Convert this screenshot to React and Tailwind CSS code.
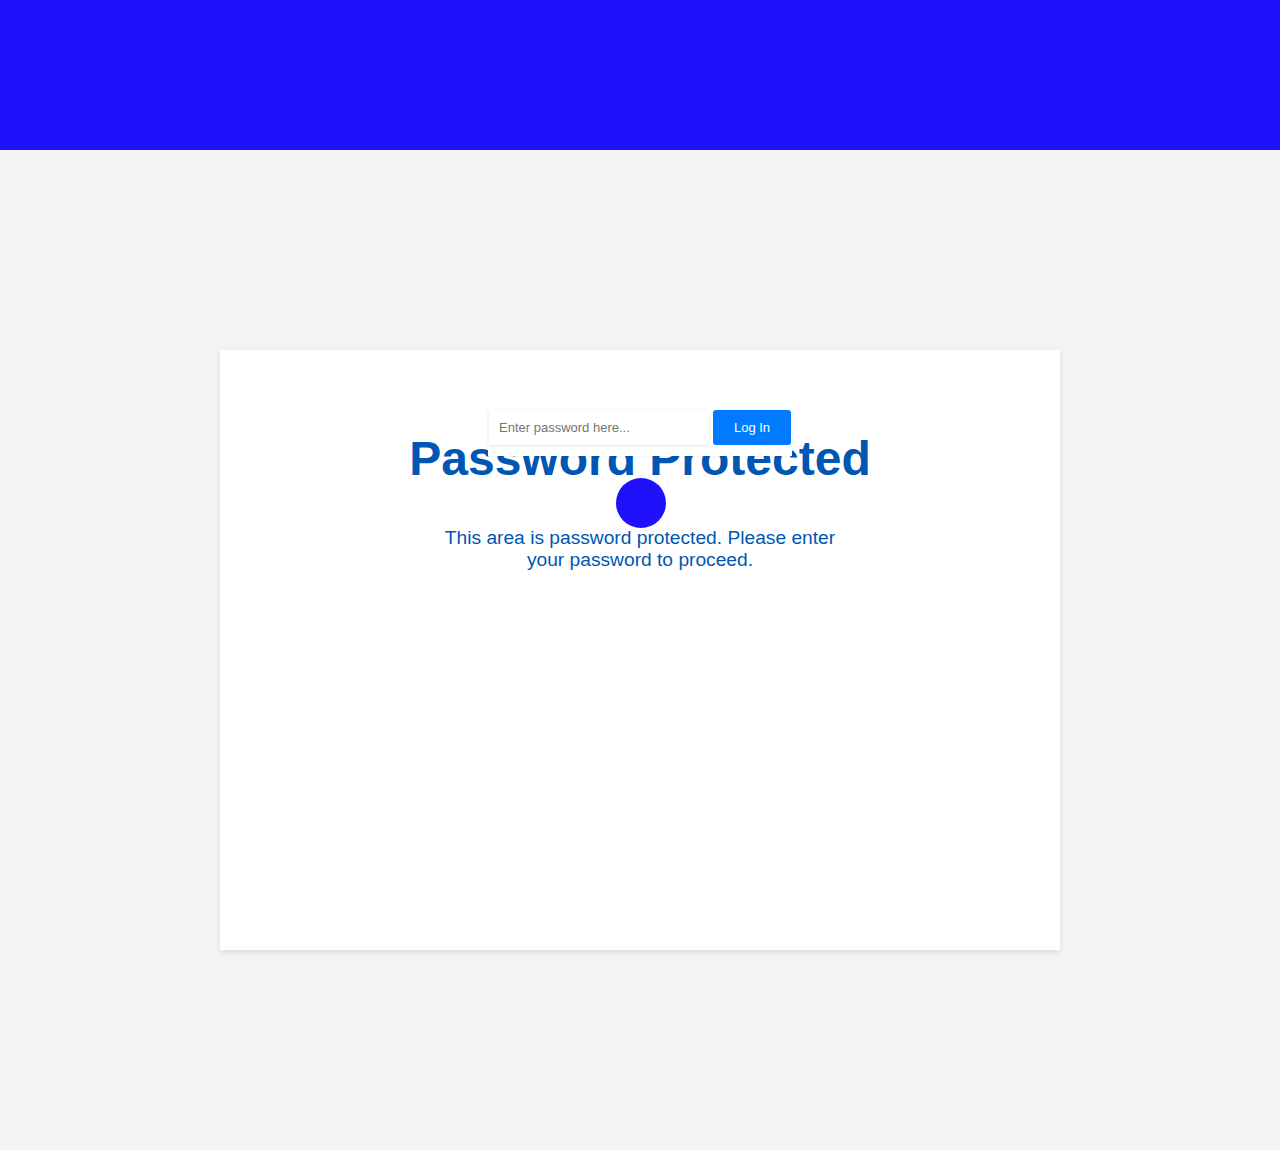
import React from 'react';

const App = () => {
  return (
    <div className="min-h-screen bg-[#f4f4f4] font-['Liberation_Sans',Arial,sans-serif]">
      {/* Header band */}
      <div className="h-[150px] bg-[#1f12fb]" />

      {/* Card */}
      <div className="flex justify-center py-[200px]">
        <div className="relative w-[840px] h-[600px] bg-white shadow-[0_2px_6px_rgba(0,0,0,0.12)]">
          <div className="flex flex-col items-center pt-[73px] text-[#0056b3]">
            <h1 className="text-[48px] font-bold leading-normal">Password Protected</h1>
            <p className="mt-[32px] w-[410px] text-center text-[19.2px] leading-[22px]">
              This area is password protected. Please enter your password to proceed.
            </p>
          </div>

          {/* Login form, sits over the title */}
          <div className="absolute left-[268px] top-[59px] flex w-[304px] h-[47px] items-start gap-[4px] bg-white p-[1px] shadow-[0_1px_3px_rgba(0,0,0,0.06)]">
            <input
              type="password"
              placeholder="Enter password here..."
              className="w-[220px] h-[35px] rounded-[3px] bg-white px-[10px] text-[13px] text-gray-700 placeholder:text-[#757575] shadow-[0_1px_3px_rgba(0,0,0,0.12)] outline-none"
            />
            <button className="w-[78px] h-[35px] rounded-[3px] bg-[#007bff] text-[13px] font-medium text-white">
              Log In
            </button>
          </div>

          {/* Spinner dot */}
          <div className="absolute left-[394px] top-[126px] flex h-[53px] w-[53px] items-center justify-center bg-white shadow-[0_0_2px_rgba(0,0,0,0.06)]">
            <div className="h-[50px] w-[50px] rounded-full bg-[#1f12fb]" />
          </div>
        </div>
      </div>
    </div>
  );
};

export default App;
